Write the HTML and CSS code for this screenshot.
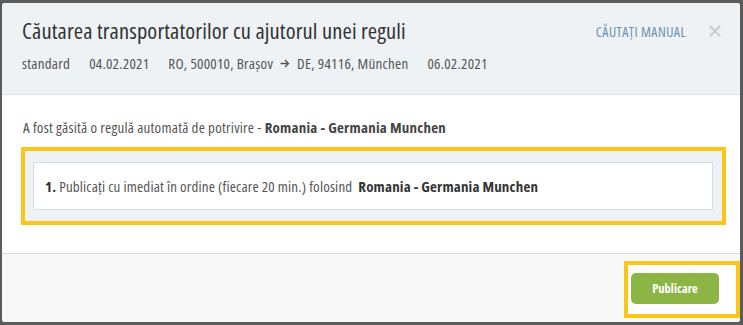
FILE: index.html
```html
<!DOCTYPE html>
<html lang="ro">
<head>
<meta charset="utf-8">
<link rel="stylesheet" href="styles.css">
</head>
<body>
<div class="overlay">
  <div class="modal">
    <div class="modal-header">
      <div class="title-row">
        <h1 class="title">Căutarea transportatorilor cu ajutorul unei reguli</h1>
        <div class="header-actions">
          <a class="manual">CĂUTAȚI MANUAL</a>
          <svg class="close" width="12" height="12" viewBox="0 0 12 12"><path d="M1 1L11 11M11 1L1 11" stroke="#c8cdd0" stroke-width="2.2" fill="none"/></svg>
        </div>
      </div>
      <div class="meta">
        <span>standard</span>
        <span>04.02.2021</span>
        <span class="route">RO, 500010, Brașov <svg class="arrow" width="10" height="9" viewBox="0 0 10 9"><path d="M0.5 4.5H8.5M5 1L8.5 4.5L5 8" stroke="#555" stroke-width="1.4" fill="none"/></svg> DE, 94116, München</span>
        <span>06.02.2021</span>
      </div>
    </div>
    <div class="modal-body">
      <p class="found">A fost găsită o regulă automată de potrivire - <b>Romania - Germania Munchen</b></p>
      <div class="highlight rules">
        <div class="rule">
          <b>1.</b> Publicați cu imediat în ordine (fiecare 20 min.) folosind&nbsp; <b>Romania - Germania Munchen</b>
        </div>
      </div>
    </div>
    <div class="modal-footer">
      <div class="highlight btn-wrap">
        <button class="publish">Publicare</button>
      </div>
    </div>
  </div>
</div>
</body>
</html>
```

FILE: styles.css
```css
* { box-sizing: border-box; }
html, body { margin: 0; padding: 0; }
body {
  width: 743px;
  height: 325px;
  background: #5b5b5b;
  font-family: "Open Sans", "Liberation Sans", sans-serif;
  font-stretch: 75%;
  overflow: hidden;
}
.overlay {
  padding: 3px 3px 0 2px;
}
.modal {
  width: 738px;
  height: 319px;
  background: #fff;
  border-radius: 3px;
  display: flex;
  flex-direction: column;
  overflow: hidden;
}
.modal-header {
  background: #eef2f5;
  height: 92px;
  border-bottom: 1px solid #dfe4e8;
  padding: 13px 20px 0 20px;
}
.title-row {
  display: flex;
  justify-content: space-between;
  align-items: center;
  height: 30px;
}
.title {
  margin: 0;
  font-weight: normal;
  font-size: 22.5px;
  line-height: 30px;
  letter-spacing: 0.13px;
  color: #333;
}
.header-actions {
  display: flex;
  align-items: center;
  gap: 23px;
}
.manual {
  font-size: 14px;
  letter-spacing: 0.4px;
  color: #6f93ad;
  text-decoration: none;
}
.close { display: block; margin-right: -1px; }
.meta {
  margin-top: 7px;
  display: flex;
  gap: 19px;
  font-size: 15px;
  line-height: 20px;
  letter-spacing: 0.25px;
  color: #555;
}
.route { display: inline-flex; align-items: center; gap: 7px; }
.arrow { display: block; }
.modal-body {
  height: 159px;
  padding: 22px 19px 0 19px;
  border-bottom: 1px solid #dcdcdc;
}
.found {
  margin: 0 0 10px 2px;
  font-size: 15px;
  line-height: 20px;
  letter-spacing: 0.23px;
  color: #555;
}
.found b { color: #444; }
.highlight {
  border: 4px solid #fbc618;
}
.rules {
  background: #eef2f5;
  padding: 11px 9px 11px 8px;
  width: 705px;
}
.rule {
  background: #fff;
  border: 1px solid #d3dee6;
  height: 48px;
  padding: 0 11px;
  display: flex;
  align-items: center;
  font-size: 15px;
  letter-spacing: 0.17px;
  color: #555;
  white-space: pre;
}
.rule b { color: #333; }
.modal-footer {
  flex: 1;
  background: #f8f8f8;
  display: flex;
  justify-content: flex-end;
  align-items: flex-start;
  padding: 7px 0 0 0;
}
.btn-wrap {
  width: 116px;
  height: 57px;
  padding: 8px 17px 0 3px;
  background: #fff;
}
.publish {
  width: 88px;
  height: 31px;
  border: none;
  border-radius: 5px;
  background: #8cb545;
  color: #fff;
  font-family: inherit;
  font-stretch: 75%;
  font-weight: bold;
  font-size: 12.5px;
  padding: 0;
}
```
